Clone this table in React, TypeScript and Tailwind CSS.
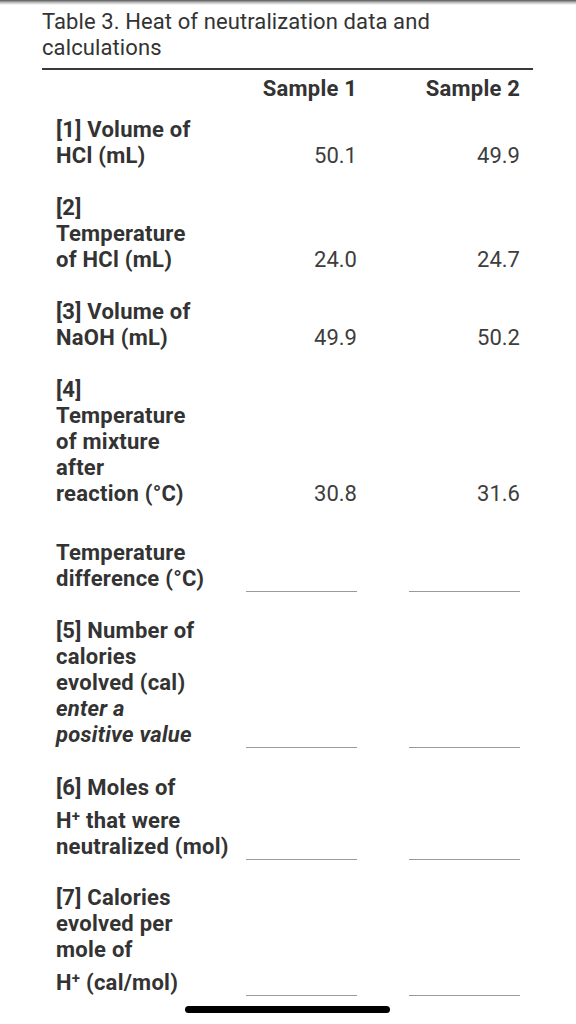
import React from "react";

type Row = {
  lines: React.ReactNode[];
  tallLast?: number;
  v1?: string;
  v2?: string;
  mt: string;
};

const Sup = () => <sup className="text-[15px] top-[-0.45em]">+</sup>;

const rows: Row[] = [
  { lines: ["[1] Volume of", "HCl (mL)"], v1: "50.1", v2: "49.9", mt: "mt-[15px]" },
  { lines: ["[2]", "Temperature", "of HCl (mL)"], v1: "24.0", v2: "24.7", mt: "mt-[26px]" },
  { lines: ["[3] Volume of", "NaOH (mL)"], v1: "49.9", v2: "50.2", mt: "mt-[26px]" },
  {
    lines: ["[4]", "Temperature", "of mixture", "after", "reaction (°C)"],
    v1: "30.8",
    v2: "31.6",
    mt: "mt-[26px]",
  },
  { lines: ["Temperature", "difference (°C)"], mt: "mt-[33px]" },
  {
    lines: [
      "[5] Number of",
      "calories",
      "evolved (cal)",
      <em key="e1">enter a</em>,
      <em key="e2">positive value</em>,
    ],
    mt: "mt-[26px]",
  },
  {
    lines: [
      "[6] Moles of",
      <span key="h">
        H<Sup /> that were
      </span>,
      "neutralized (mol)",
    ],
    tallLast: 1,
    mt: "mt-[27px]",
  },
  {
    lines: [
      "[7] Calories",
      "evolved per",
      "mole of",
      <span key="h2">
        H<Sup /> (cal/mol)
      </span>,
    ],
    tallLast: 3,
    mt: "mt-[25px]",
  },
];

export default function App() {
  return (
    <div
      className="relative w-[576px] h-[1024px] bg-white overflow-hidden text-[#333]"
      style={{ fontFamily: "Roboto, 'Liberation Sans', sans-serif" }}
    >
      <div className="h-[5px] bg-linear-to-b from-[#5a5a5a] via-[#bdbdbd] to-white" />
      <div className="pl-[42px] pr-[43px]">
        <div className="mt-[4px] text-[22px] leading-[26px] tracking-[0.1px] text-[#333]">
          Table 3. Heat of neutralization data and
          <br />
          calculations
        </div>
        <div className="mt-[7px] h-[1.5px] bg-[#3a3a3a]" />
        <div className="pl-[14px]">
          <div className="mt-[6px] flex text-[22px] leading-[26px] font-bold tracking-[0.2px] text-[#333]">
            <div className="w-[190px]" />
            <div className="w-[111px] text-right">Sample 1</div>
            <div className="w-[111px] ml-[52px] text-right">Sample 2</div>
          </div>
          {rows.map((r, i) => (
            <div key={i} className={`${r.mt} flex items-end text-[22px] leading-[26px]`}>
              <div className="w-[190px] font-bold tracking-[0.25px] text-[#333] whitespace-nowrap">
                {r.lines.map((l, j) => (
                  <div key={j} className={r.tallLast === j ? "mt-[7px]" : ""}>
                    {l}
                  </div>
                ))}
              </div>
              {r.v1 !== undefined ? (
                <>
                  <div className="w-[111px] text-right text-[#3d3d3d]">{r.v1}</div>
                  <div className="w-[111px] ml-[52px] text-right text-[#3d3d3d]">{r.v2}</div>
                </>
              ) : (
                <>
                  <div className="w-[111px] h-[26px] border-b-[1.5px] border-[#9a9a9a]" />
                  <div className="w-[111px] ml-[52px] h-[26px] border-b-[1.5px] border-[#9a9a9a]" />
                </>
              )}
            </div>
          ))}
        </div>
      </div>
      <div className="absolute left-[185px] top-[1006px] w-[205px] h-[7px] rounded-full bg-black" />
    </div>
  );
}
